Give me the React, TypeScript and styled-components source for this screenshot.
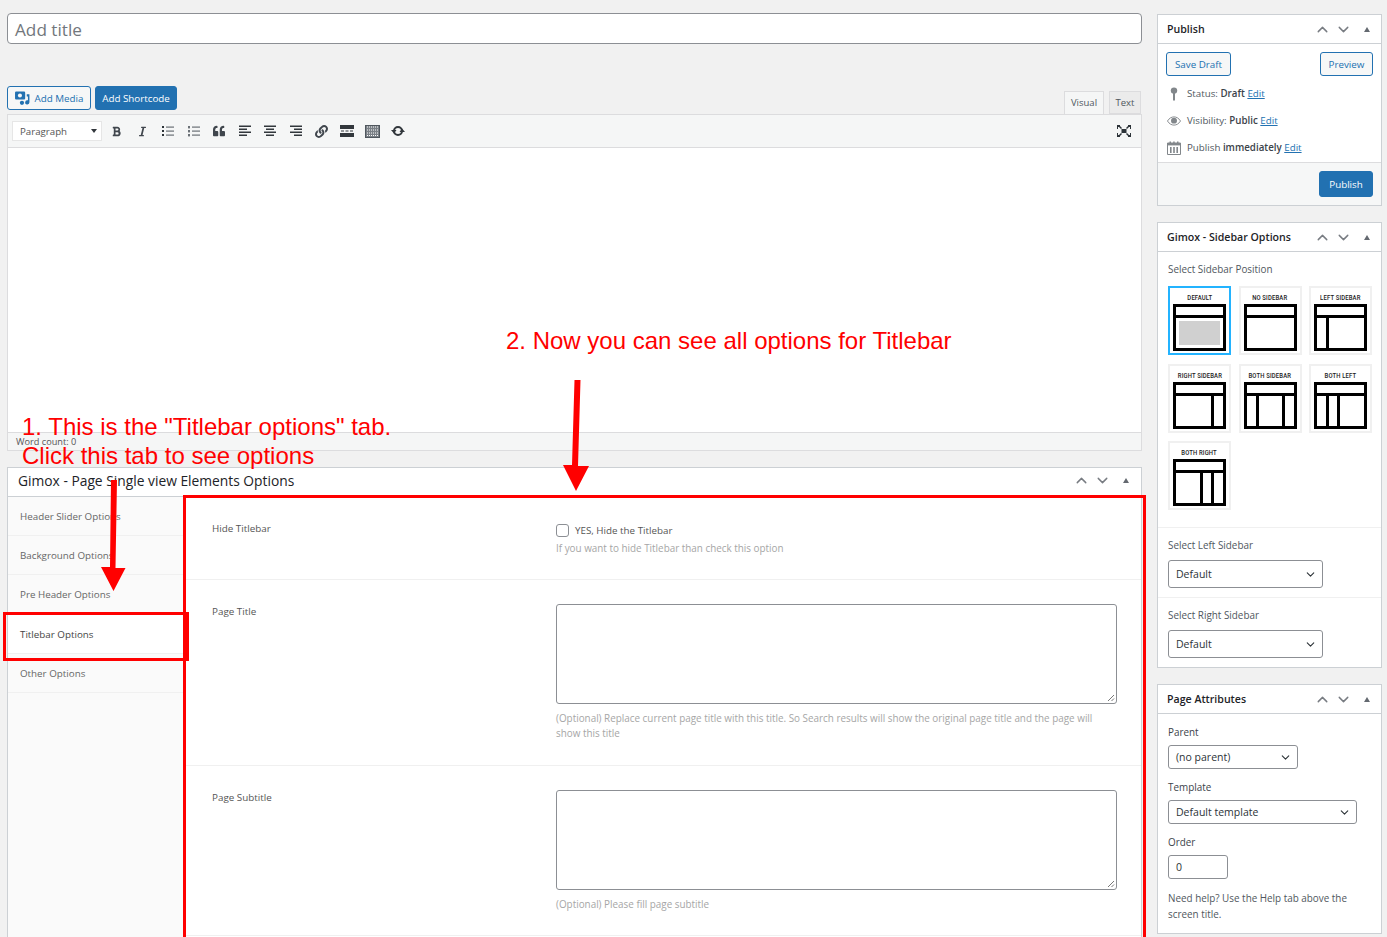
import React from "react";
import styled, { createGlobalStyle } from "styled-components";
import { ChevronUp, ChevronDown } from "lucide-react";
import { FaBold, FaItalic, FaQuoteLeft, FaLink } from "react-icons/fa";

const Global = createGlobalStyle`
  html, body { margin: 0; padding: 0; height: 937px; overflow: hidden; background: #f1f1f1; }
  body { font-family: "Open Sans", "Noto Sans", sans-serif; font-size: 9.85px; color: #444; }
  * { box-sizing: border-box; }
`;

const Page = styled.div`
  position: relative;
  width: 1387px;
  height: 937px;
  overflow: hidden;
  display: grid;
  grid-template-columns: 1135px 225px;
  column-gap: 15px;
  padding: 13px 0 0 7px;
  align-items: start;
`;
const MainCol = styled.div`display: flex; flex-direction: column;`;
const SideCol = styled.div`display: flex; flex-direction: column; gap: 16px; padding-top: 1px;`;

const TitleInput = styled.div`
  height: 31px;
  background: #fff;
  border: 1px solid #8c8f94;
  border-radius: 4px;
  padding-left: 7px;
  font-size: 17.2px;
  line-height: 31px;
  color: #72777c;
`;
const EditorTop = styled.div`
  margin-top: 42px;
  height: 28px;
  display: flex;
  justify-content: space-between;
  align-items: flex-end;
`;
const MediaButtons = styled.div`display: flex; gap: 4px; align-self: flex-start;`;
const Btn = styled.div<{ $primary?: boolean; $w: number; $h?: number }>`
  width: ${p => p.$w}px;
  height: ${p => p.$h ?? 24}px;
  display: flex;
  align-items: center;
  justify-content: center;
  gap: 5px;
  border: 1px solid #2271b1;
  border-radius: 3px;
  font-size: 9.8px;
  background: ${p => (p.$primary ? "#2271b1" : "#f6f7f7")};
  color: ${p => (p.$primary ? "#fff" : "#2271b1")};
`;
const Tabs = styled.div`display: flex; gap: 5px; padding-right: 1px;`;
const Tab = styled.div<{ $active?: boolean; $w: number }>`
  width: ${p => p.$w}px;
  height: ${p => (p.$active ? 24 : 23)}px;
  margin-bottom: ${p => (p.$active ? -1 : 0)}px;
  padding-bottom: ${p => (p.$active ? 2 : 0)}px;
  display: flex;
  align-items: center;
  justify-content: center;
  background: ${p => (p.$active ? "#f5f6f6" : "#ebebeb")};
  border: 1px solid #dcdcde;
  border-bottom: ${p => (p.$active ? "none" : "1px solid #dcdcde")};
  font-size: 9.5px;
  color: #50575e;
`;
const Editor = styled.div`border: 1px solid #dcdcde; background: #fff;`;
const Toolbar = styled.div`
  height: 33px;
  background: #f5f6f6;
  border-bottom: 1px solid #dcdcde;
  display: flex;
  align-items: center;
  padding: 0 10px 0 4px;
`;
const FormatSelect = styled.div`
  width: 90px;
  height: 20px;
  background: #fff;
  border: 1px solid #e6e6e6;
  display: flex;
  align-items: center;
  justify-content: space-between;
  padding: 0 4px 0 7px;
  color: #555;
  font-size: 9.7px;
  margin-right: 2px;
`;
const Caret = styled.span`
  width: 0; height: 0;
  border-left: 3px solid transparent;
  border-right: 3px solid transparent;
  border-top: 4px solid #32373c;
`;
const ToolBtn = styled.span`
  width: 25.6px;
  height: 20px;
  display: flex;
  align-items: center;
  justify-content: center;
  color: #40464d;
`;
const ToolSpacer = styled.div`flex: 1;`;
const EditArea = styled.div`height: 284px; background: #fff;`;
const StatusBar = styled.div`
  height: 18px;
  background: #f5f6f6;
  border-top: 1px solid #dcdcde;
  padding-left: 8px;
  font-size: 9.2px;
  line-height: 18px;
  color: #555;
`;

const MetaBox = styled.div`
  margin-top: 16px;
  background: #fff;
  border: 1px solid #ccd0d4;
  height: 500px;
`;
const MetaHeader = styled.div`
  height: 29px;
  border-bottom: 1px solid #ccd0d4;
  display: flex;
  align-items: center;
  justify-content: space-between;
  padding: 0 10px 3px 10px;
  font-size: 13.8px;
  color: #1d2327;
`;
const Controls = styled.div`display: flex; align-items: center; color: #787c82;`;
const TriUp = styled.span`
  width: 0; height: 0; margin-left: 12px; margin-right: 2px;
  border-left: 3.5px solid transparent;
  border-right: 3.5px solid transparent;
  border-bottom: 5px solid #646970;
`;
const MetaBody = styled.div`display: grid; grid-template-columns: 176px 1fr; height: 470px;`;
const TabList = styled.div`background: #fafafa; display: flex; flex-direction: column;`;
const TabItem = styled.div<{ $active?: boolean; $h: number }>`
  height: ${p => p.$h}px;
  padding-left: 12px;
  display: flex;
  align-items: center;
  font-size: 9.8px;
  color: ${p => (p.$active ? "#444" : "#666")};
  background: ${p => (p.$active ? "#fff" : "transparent")};
  border-bottom: 1px solid #f0f0f0;
`;
const Fields = styled.div`display: flex; flex-direction: column;`;
const FieldRow = styled.div<{ $h: number }>`
  height: ${p => p.$h}px;
  display: grid;
  grid-template-columns: 344px 561px;
  padding: 24px 0 0 28px;
  border-bottom: 1px solid #f0f0f0;
`;
const FieldLabel = styled.div`font-size: 9.85px; line-height: 16px; color: #555; margin-top: -1px;`;
const CheckLine = styled.label`display: flex; align-items: center; gap: 6px; height: 16px; margin-top: 1px; color: #555; font-size: 9.8px;`;
const Check = styled.span`
  width: 13px; height: 13px; background: #fff;
  border: 1px solid #8c8f94; border-radius: 3px;
`;
const Hint = styled.div<{ $mt: number }>`
  margin-top: ${p => p.$mt}px;
  font-size: 9.9px;
  line-height: 15px;
  color: #a6a6a6;
`;
const TextArea = styled.div`
  height: 100px;
  background: #fff;
  border: 1px solid #8c8f94;
  border-radius: 3px;
  position: relative;
`;
const Grip = styled.svg`position: absolute; right: 1px; bottom: 1px;`;

const SideBox = styled.div<{ $h: number }>`
  height: ${p => p.$h}px;
  background: #fff;
  border: 1px solid #ccd0d4;
  display: flex;
  flex-direction: column;
`;
const SideHeader = styled.div`
  height: 29px;
  flex: none;
  border-bottom: 1px solid #ccd0d4;
  display: flex;
  align-items: center;
  justify-content: space-between;
  padding: 0 9px 0 9px;
  font-size: 10.6px;
  font-weight: 600;
  color: #1d2327;
`;
const PubActions = styled.div`display: flex; justify-content: space-between; padding: 8px 8px 0 8px;`;
const PubRows = styled.div`display: flex; flex-direction: column; padding: 4px 0 0 9px; flex: 1;`;
const PubRow = styled.div`height: 27px; display: flex; align-items: center; gap: 6px; font-size: 9.75px; color: #50575e;`;
const IconSlot = styled.span`width: 14px; display: flex; justify-content: center; color: #82878b;`;
const Bold = styled.b`font-weight: 600; color: #3c434a;`;
const EditLink = styled.a`color: #2271b1; text-decoration: underline;`;
const PubFooter = styled.div`
  height: 43px;
  flex: none;
  background: #f6f7f7;
  border-top: 1px solid #dcdcde;
  display: flex;
  justify-content: flex-end;
  align-items: center;
  padding-right: 8px;
`;
const SideSection = styled.div<{ $last?: boolean }>`
  padding: 9px 10px 9px 10px;
  border-bottom: ${p => (p.$last ? "none" : "1px solid #f0f0f0")};
`;
const SideLabel = styled.div`font-size: 9.9px; line-height: 16px; color: #50575e;`;
const LayoutGrid = styled.div`
  margin-top: 9px;
  display: grid;
  grid-template-columns: repeat(3, 63px);
  column-gap: 7.5px;
  row-gap: 8.5px;
  padding-bottom: 8px;
`;
const LayoutCard = styled.div<{ $sel?: boolean }>`
  height: 69px;
  border: 2px solid ${p => (p.$sel ? "#23b3ff" : "#f0f0f0")};
  display: flex;
  flex-direction: column;
  align-items: center;
  padding-top: 5px;
`;
const LayoutName = styled.div`
  font-family: "Roboto", "Liberation Sans", sans-serif;
  font-weight: 500;
  font-size: 8px;
  line-height: 9px;
  height: 11px;
  color: #222;
  letter-spacing: 0.2px;
  white-space: nowrap;
  transform: scaleX(0.74);
`;
const SelectBox = styled.div<{ $w: number; $h?: number; $mt?: number }>`
  width: ${p => p.$w}px;
  height: ${p => p.$h ?? 24}px;
  margin-top: ${p => p.$mt ?? 5}px;
  background: #fff;
  border: 1px solid #8c8f94;
  border-radius: 3px;
  display: flex;
  align-items: center;
  justify-content: space-between;
  padding: 0 5px 0 7px;
  font-size: 10.5px;
  color: #2c3338;
`;
const AttrBody = styled.div`padding: 10px 10px 0 10px; display: flex; flex-direction: column;`;
const AttrLabel = styled.div<{ $mt?: number }>`
  font-size: 9.9px;
  line-height: 16px;
  font-weight: 500;
  color: #3c434a;
  margin-top: ${p => p.$mt ?? 0}px;
`;
const HelpText = styled.div`margin-top: 11px; font-size: 9.9px; line-height: 16px; color: #50575e;`;

const Note = styled.div<{ $x: number; $y: number }>`
  position: absolute;
  left: ${p => p.$x}px;
  top: ${p => p.$y}px;
  font-family: "Liberation Sans", Arial, sans-serif;
  font-size: 24px;
  line-height: 29px;
  color: #f00;
  white-space: nowrap;
`;
const RedFrame = styled.div<{ $x: number; $y: number; $w: number; $h: number }>`
  position: absolute;
  left: ${p => p.$x}px;
  top: ${p => p.$y}px;
  width: ${p => p.$w}px;
  height: ${p => p.$h}px;
  border: 3px solid #f00;
`;
const ArrowLayer = styled.svg`position: absolute; left: 0; top: 0; pointer-events: none;`;

const Ctl = () => (
  <Controls>
    <ChevronUp size={17} strokeWidth={2} style={{ marginRight: 4 }} />
    <ChevronDown size={17} strokeWidth={2} />
    <TriUp />
  </Controls>
);

const Chev = () => <ChevronDown size={13} strokeWidth={2} color="#2c3338" />;

const Lines = ({ kind }: { kind: "ul" | "ol" | "left" | "center" | "right" }) => {
  if (kind === "ul" || kind === "ol") {
    return (
      <svg width="14" height="14" viewBox="0 0 14 14">
        {[2, 6, 10].map(y => (
          <g key={y}>
            <rect x="1" y={y} width="2" height={kind === "ul" ? 2 : 2.4} fill={kind === "ul" ? "#2c3338" : "#6b7177"} />
            <rect x="5" y={y + 0.5} width="8" height="1.2" fill="#6b7177" />
          </g>
        ))}
      </svg>
    );
  }
  const rows = kind === "left"
    ? [[1, 12], [1, 8], [1, 12], [1, 8]]
    : kind === "center"
    ? [[1, 12], [3, 8], [1, 12], [3, 8]]
    : [[1, 12], [5, 8], [1, 12], [5, 8]];
  return (
    <svg width="14" height="14" viewBox="0 0 14 14" fill="#32373c">
      {rows.map(([x, w], i) => <rect key={i} x={x} y={1.5 + i * 3} width={w} height="1.5" />)}
    </svg>
  );
};

const MediaIcon = () => (
  <svg width="15" height="16" viewBox="0 0 14 15" fill="#2271b1">
    <path d="M1 1.500h7.500a1 1 0 0 1 1 1V8a1 1 0 0 1-1 1H1a1 1 0 0 1-1-1V2.500a1 1 0 0 1 1-1z" />
    <circle cx="4.600" cy="5.200" r="1.900" fill="#f6f7f7" />
    <path d="M11 4h2.500v7.600a2 2 0 1 1-1.400-1.900V6H11z" />
    <circle cx="6.500" cy="12" r="2" />
  </svg>
);

const ReadMore = () => (
  <svg width="14" height="12" viewBox="0 0 14 12" fill="#32373c">
    <rect x="0" y="0" width="14" height="4" />
    <rect x="0" y="8" width="14" height="4" />
    <rect x="1" y="5.500" width="3" height="1" />
    <rect x="5.500" y="5.500" width="3" height="1" />
    <rect x="10" y="5.500" width="3" height="1" />
  </svg>
);

const Sink = () => (
  <svg width="15" height="13" viewBox="0 0 15 13">
    <rect x="0.500" y="0.500" width="14" height="12" fill="#7a8086" stroke="#50575e" />
    {[2, 5, 8, 10.500].map(y => (
      <path key={y} d={`M2 ${y}h11`} stroke="#fff" strokeWidth="1" strokeDasharray="1 1" />
    ))}
  </svg>
);

const Refresh = () => (
  <svg width="14" height="14" viewBox="0 0 14 14" fill="#32373c">
    <circle cx="7" cy="7" r="4" fill="none" stroke="#32373c" strokeWidth="2" />
    <path d="M0 6h5.500L3 9.500zM14 8H8.500L11 4.500z" />
  </svg>
);

const Fullscreen = () => (
  <svg width="14" height="12" viewBox="0 0 14 12" fill="#2c3338">
    <rect x="4.500" y="4" width="5" height="4" />
    <path d="M0 0h3v1l2 2-1 1-2-2H1v2H0zM14 0h-3v1L9 3l1 1 2-2h1v2h1zM0 12h3v-1l2-2-1-1-2 2H1V8H0zM14 12h-3v-1L9 9l1-1 2 2h1V8h1z" />
  </svg>
);

const Pin = () => (
  <svg width="10" height="14" viewBox="0 0 10 14" fill="#82878b">
    <circle cx="5" cy="3.600" r="3.200" />
    <rect x="4" y="6" width="2" height="7.500" />
  </svg>
);
const Eye = () => (
  <svg width="15" height="10" viewBox="0 0 15 10">
    <path d="M0.500 5C2.500 1.800 5 .6 7.500 .6S12.500 1.800 14.500 5C12.500 8.200 10 9.400 7.500 9.400S2.500 8.200 .5 5z" fill="none" stroke="#82878b" />
    <circle cx="7.500" cy="4.600" r="3.200" fill="#82878b" />
  </svg>
);
const Calendar = () => (
  <svg width="14" height="14" viewBox="0 0 14 14" fill="#82878b">
    <path d="M0.500 2h13v11.500H.5z" fill="#fff" stroke="#82878b" />
    <rect x="0.500" y="2" width="13" height="2.400" />
    <rect x="2.500" y="0.500" width="1.500" height="2.500" />
    <rect x="6.200" y="0.500" width="1.500" height="2.500" />
    <rect x="10" y="0.500" width="1.500" height="2.500" />
    <rect x="3" y="6" width="1.600" height="6" />
    <rect x="6.200" y="6" width="1.600" height="6" />
    <rect x="9.400" y="6" width="1.600" height="6" />
  </svg>
);

type Split = { bars: number[]; fill?: boolean };
const LayoutIcon = ({ bars, fill }: Split) => (
  <svg width="53" height="47" viewBox="0 0 53 47">
    <rect x="1.500" y="1.500" width="50" height="44" fill="#fff" stroke="#000" strokeWidth="3" />
    <rect x="0" y="11" width="53" height="3" fill="#000" />
    {fill && <rect x="6" y="17" width="41" height="24" fill="#d0d0d0" />}
    {bars.map(x => <rect key={x} x={x} y="12" width="3" height="33" fill="#000" />)}
  </svg>
);

const layouts: { name: string; bars: number[]; fill?: boolean; sel?: boolean }[] = [
  { name: "DEFAULT", bars: [], fill: true, sel: true },
  { name: "NO SIDEBAR", bars: [] },
  { name: "LEFT SIDEBAR", bars: [12] },
  { name: "RIGHT SIDEBAR", bars: [38] },
  { name: "BOTH SIDEBAR", bars: [12, 38] },
  { name: "BOTH LEFT", bars: [12, 23] },
  { name: "BOTH RIGHT", bars: [27, 38] },
];

const tabs = [
  { t: "Header Slider Options", h: 39 },
  { t: "Background Options", h: 39 },
  { t: "Pre Header Options", h: 40 },
  { t: "Titlebar Options", h: 39, a: true },
  { t: "Other Options", h: 39 },
];

const ResizeGrip = () => (
  <Grip width="8" height="8" viewBox="0 0 8 8">
    <path d="M1 7L7 1M4.500 7L7 4.500" stroke="#777" strokeWidth="1" />
  </Grip>
);

export default function App() {
  return (
    <Page>
      <Global />
      <MainCol>
        <TitleInput>Add title</TitleInput>
        <EditorTop>
          <MediaButtons>
            <Btn $w={84}><MediaIcon />Add Media</Btn>
            <Btn $w={82} $primary>Add Shortcode</Btn>
          </MediaButtons>
          <Tabs>
            <Tab $w={40} $active>Visual</Tab>
            <Tab $w={32}>Text</Tab>
          </Tabs>
        </EditorTop>
        <Editor>
          <Toolbar>
            <FormatSelect>Paragraph<Caret /></FormatSelect>
            <ToolBtn><FaBold size={11} /></ToolBtn>
            <ToolBtn><FaItalic size={11} /></ToolBtn>
            <ToolBtn><Lines kind="ul" /></ToolBtn>
            <ToolBtn><Lines kind="ol" /></ToolBtn>
            <ToolBtn><FaQuoteLeft size={12} /></ToolBtn>
            <ToolBtn><Lines kind="left" /></ToolBtn>
            <ToolBtn><Lines kind="center" /></ToolBtn>
            <ToolBtn><Lines kind="right" /></ToolBtn>
            <ToolBtn><FaLink size={13} /></ToolBtn>
            <ToolBtn><ReadMore /></ToolBtn>
            <ToolBtn><Sink /></ToolBtn>
            <ToolBtn><Refresh /></ToolBtn>
            <ToolSpacer />
            <Fullscreen />
          </Toolbar>
          <EditArea />
          <StatusBar>Word count: 0</StatusBar>
        </Editor>
        <MetaBox>
          <MetaHeader>
            Gimox - Page Single view Elements Options
            <Ctl />
          </MetaHeader>
          <MetaBody>
            <TabList>
              {tabs.map(t => <TabItem key={t.t} $h={t.h} $active={t.a}>{t.t}</TabItem>)}
            </TabList>
            <Fields>
              <FieldRow $h={83}>
                <FieldLabel>Hide Titlebar</FieldLabel>
                <div>
                  <CheckLine><Check />YES, Hide the Titlebar</CheckLine>
                  <Hint $mt={3}>If you want to hide Titlebar than check this option</Hint>
                </div>
              </FieldRow>
              <FieldRow $h={186}>
                <FieldLabel>Page Title</FieldLabel>
                <div>
                  <TextArea><ResizeGrip /></TextArea>
                  <Hint $mt={7}>(Optional) Replace current page title with this title. So Search results will show the original page title and the page will show this title</Hint>
                </div>
              </FieldRow>
              <FieldRow $h={170}>
                <FieldLabel>Page Subtitle</FieldLabel>
                <div>
                  <TextArea><ResizeGrip /></TextArea>
                  <Hint $mt={7}>(Optional) Please fill page subtitle</Hint>
                </div>
              </FieldRow>
            </Fields>
          </MetaBody>
        </MetaBox>
      </MainCol>

      <SideCol>
        <SideBox $h={192}>
          <SideHeader>Publish<Ctl /></SideHeader>
          <PubActions>
            <Btn $w={65}>Save Draft</Btn>
            <Btn $w={53}>Preview</Btn>
          </PubActions>
          <PubRows>
            <PubRow><IconSlot><Pin /></IconSlot><span>Status: <Bold>Draft</Bold> <EditLink>Edit</EditLink></span></PubRow>
            <PubRow><IconSlot><Eye /></IconSlot><span>Visibility: <Bold>Public</Bold> <EditLink>Edit</EditLink></span></PubRow>
            <PubRow><IconSlot><Calendar /></IconSlot><span>Publish <Bold>immediately</Bold> <EditLink>Edit</EditLink></span></PubRow>
          </PubRows>
          <PubFooter><Btn $w={54} $h={26} $primary>Publish</Btn></PubFooter>
        </SideBox>

        <SideBox $h={446}>
          <SideHeader>Gimox - Sidebar Options<Ctl /></SideHeader>
          <SideSection>
            <SideLabel>Select Sidebar Position</SideLabel>
            <LayoutGrid>
              {layouts.map(l => (
                <LayoutCard key={l.name} $sel={l.sel}>
                  <LayoutName>{l.name}</LayoutName>
                  <LayoutIcon bars={l.bars} fill={l.fill} />
                </LayoutCard>
              ))}
            </LayoutGrid>
          </SideSection>
          <SideSection>
            <SideLabel>Select Left Sidebar</SideLabel>
            <SelectBox $w={155} $h={28} $mt={7}>Default<Chev /></SelectBox>
          </SideSection>
          <SideSection $last>
            <SideLabel>Select Right Sidebar</SideLabel>
            <SelectBox $w={155} $h={28} $mt={7}>Default<Chev /></SelectBox>
          </SideSection>
        </SideBox>

        <SideBox $h={250}>
          <SideHeader>Page Attributes<Ctl /></SideHeader>
          <AttrBody>
            <AttrLabel>Parent</AttrLabel>
            <SelectBox $w={130}>(no parent)<Chev /></SelectBox>
            <AttrLabel $mt={10}>Template</AttrLabel>
            <SelectBox $w={189}>Default template<Chev /></SelectBox>
            <AttrLabel $mt={10}>Order</AttrLabel>
            <SelectBox $w={60}>0</SelectBox>
            <HelpText>Need help? Use the Help tab above the screen title.</HelpText>
          </AttrBody>
        </SideBox>
      </SideCol>

      <Note $x={506} $y={326}>2. Now you can see all options for Titlebar</Note>
      <Note $x={22} $y={412}>1. This is the "Titlebar options" tab.<br />Click this tab to see options</Note>
      <RedFrame $x={183} $y={495} $w={963} $h={460} />
      <RedFrame $x={3} $y={612} $w={186} $h={49} />
      <ArrowLayer width="1387" height="937" viewBox="0 0 1387 937">
        <path d="M111 480h6l-1.500 88h10l-12 23L101 567h9z" fill="#f00" />
        <path d="M574.500 380h6l-2.500 86h11l-13 25-13-26h9z" fill="#f00" />
      </ArrowLayer>
    </Page>
  );
}
